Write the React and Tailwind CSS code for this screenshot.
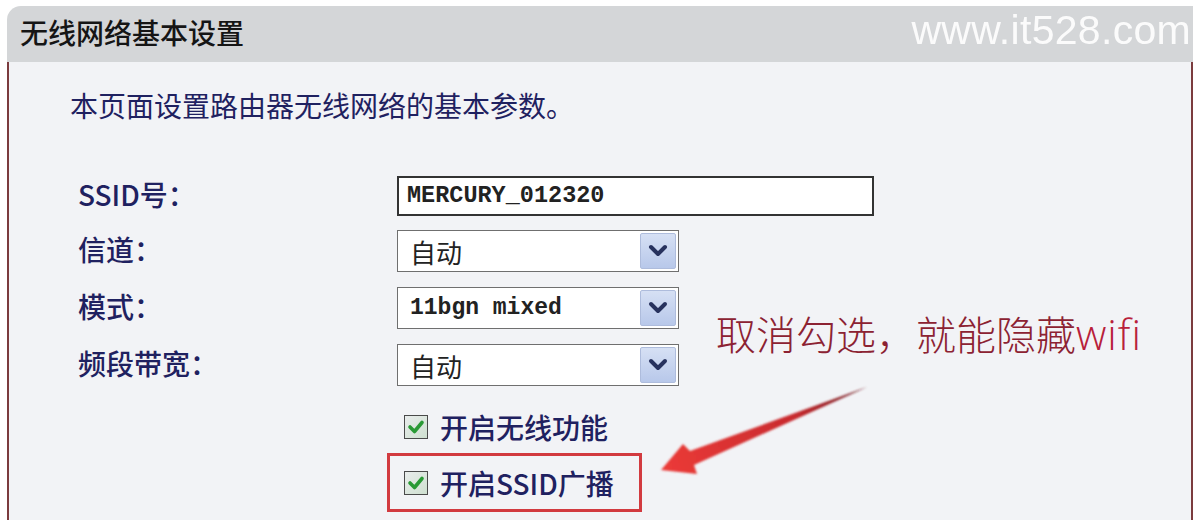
import React from "react";

const cjk = { fontFamily: '"Noto Sans CJK SC", "Noto Sans", sans-serif' };
const mono = { fontFamily: '"Liberation Mono", "Noto Sans CJK SC", monospace' };

function Chevron() {
  return (
    <div className="w-[36px] h-[36px] mr-[2px] rounded-[2px] bg-gradient-to-b from-[#d6e0f4] to-[#b8c8ea] border border-[#aebcdc] flex items-center justify-center">
      <svg width="20" height="14" viewBox="0 0 20 14">
        <path d="M3 3 L10 10 L17 3" fill="none" stroke="#27325e" strokeWidth="4" strokeLinecap="round" strokeLinejoin="round" />
      </svg>
    </div>
  );
}

function Select({ children, isMono }) {
  return (
    <div className="w-[282px] h-[42px] border-[1.5px] border-[#6f6f6f] bg-white flex items-center justify-between pl-[12px]">
      <span className={isMono ? "text-[23px] font-bold text-[#222]" : "text-[26px] text-[#222]"} style={isMono ? mono : cjk}>
        {children}
      </span>
      <Chevron />
    </div>
  );
}

function Checkbox() {
  return (
    <div className="w-[24px] h-[24px] border-[1.5px] border-[#4a4a4a] bg-gradient-to-br from-[#e9ecec] to-[#cfe0d0] flex items-center justify-center shrink-0">
      <svg width="18" height="16" viewBox="0 0 18 16">
        <path d="M3 8 L7.5 12.5 L15 3.5" fill="none" stroke="#2a9a35" strokeWidth="3.6" strokeLinecap="round" strokeLinejoin="round" />
      </svg>
    </div>
  );
}

function Label({ children }) {
  return (
    <div className="flex items-center text-[28px] font-medium text-[#1f2160] leading-none -mt-[4px]" style={cjk}>
      {children}
    </div>
  );
}

export default function App() {
  return (
    <div className="relative w-[1200px] h-[520px] bg-white overflow-hidden pl-[7px] pr-[7px] pt-[6px] flex flex-col">
      <div className="h-[56px] rounded-tl-[14px] bg-[#d4d6d8] flex items-center justify-between pl-[13px] pr-[2px] shrink-0">
        <span className="text-[28px] font-medium text-[#151515] leading-none -mt-[5px]" style={cjk}>无线网络基本设置</span>
        <span className="text-[41px] text-white leading-none tracking-[0.3px] -mt-[8px]" style={{ fontFamily: '"Liberation Sans", sans-serif', opacity: 0.92 }}>
          www.it528.com
        </span>
      </div>
      <div className="flex-1 bg-[#f2f3f6] border-l-2 border-r-2 border-[#7b3b3e] pl-[61px] pt-[29px] relative">
        <div className="text-[28px] text-[#1f2160] leading-none" style={cjk}>本页面设置路由器无线网络的基本参数。</div>

        <div className="grid grid-cols-[319px_auto] mt-[57px] w-fit ml-[8px]">
          <Label>SSID号：</Label>
          <div className="w-[477px] h-[40px] border-2 border-[#333] bg-white flex items-center pl-[8px]">
            <span className="text-[23.5px] font-bold text-[#222]" style={mono}>MERCURY_012320</span>
          </div>

          <div className="h-[14px] col-span-2" />
          <Label>信道：</Label>
          <Select>自动</Select>

          <div className="h-[15px] col-span-2" />
          <Label>模式：</Label>
          <Select isMono>11bgn mixed</Select>

          <div className="h-[15px] col-span-2" />
          <Label>频段带宽：</Label>
          <Select>自动</Select>

          <div />
          <div className="pt-[27px] pl-[7px] flex items-center gap-[12px]">
            <Checkbox />
            <span className="text-[28px] font-medium text-[#1f2160] leading-none" style={cjk}>开启无线功能</span>
          </div>

          <div />
          <div className="mt-[12px] -ml-[10px] w-[255px] h-[59px] border-[3px] border-[#d23a3f] flex items-center pl-[14px] gap-[12px]">
            <Checkbox />
            <span className="text-[28px] font-medium text-[#1f2160] leading-none" style={cjk}>开启SSID广播</span>
          </div>
        </div>

        <div className="absolute left-[707px] top-[251px] text-[40px] font-light text-[#8c2232] leading-none whitespace-nowrap" style={cjk}>
          取消勾选，就能隐藏<span className="text-[42px] tracking-[1px] text-[#b8203a]" style={{ fontFamily: '"Open Sans", "Liberation Sans", sans-serif' }}>wifi</span>
        </div>
      </div>

      <svg className="absolute left-0 top-0 pointer-events-none" width="1200" height="520">
        <defs>
          <linearGradient id="arr" x1="867" y1="387" x2="661" y2="470" gradientUnits="userSpaceOnUse">
            <stop offset="0" stopColor="#6a1a20" />
            <stop offset="0.35" stopColor="#c82a2e" />
            <stop offset="1" stopColor="#ec3b38" />
          </linearGradient>
          <filter id="glow" x="-10%" y="-20%" width="120%" height="140%">
            <feGaussianBlur stdDeviation="0.8" />
          </filter>
        </defs>
        <polygon
          points="867,387 690,451 683,444 661,470 697,474 694,465"
          fill="url(#arr)"
          filter="url(#glow)"
        />
      </svg>
    </div>
  );
}
